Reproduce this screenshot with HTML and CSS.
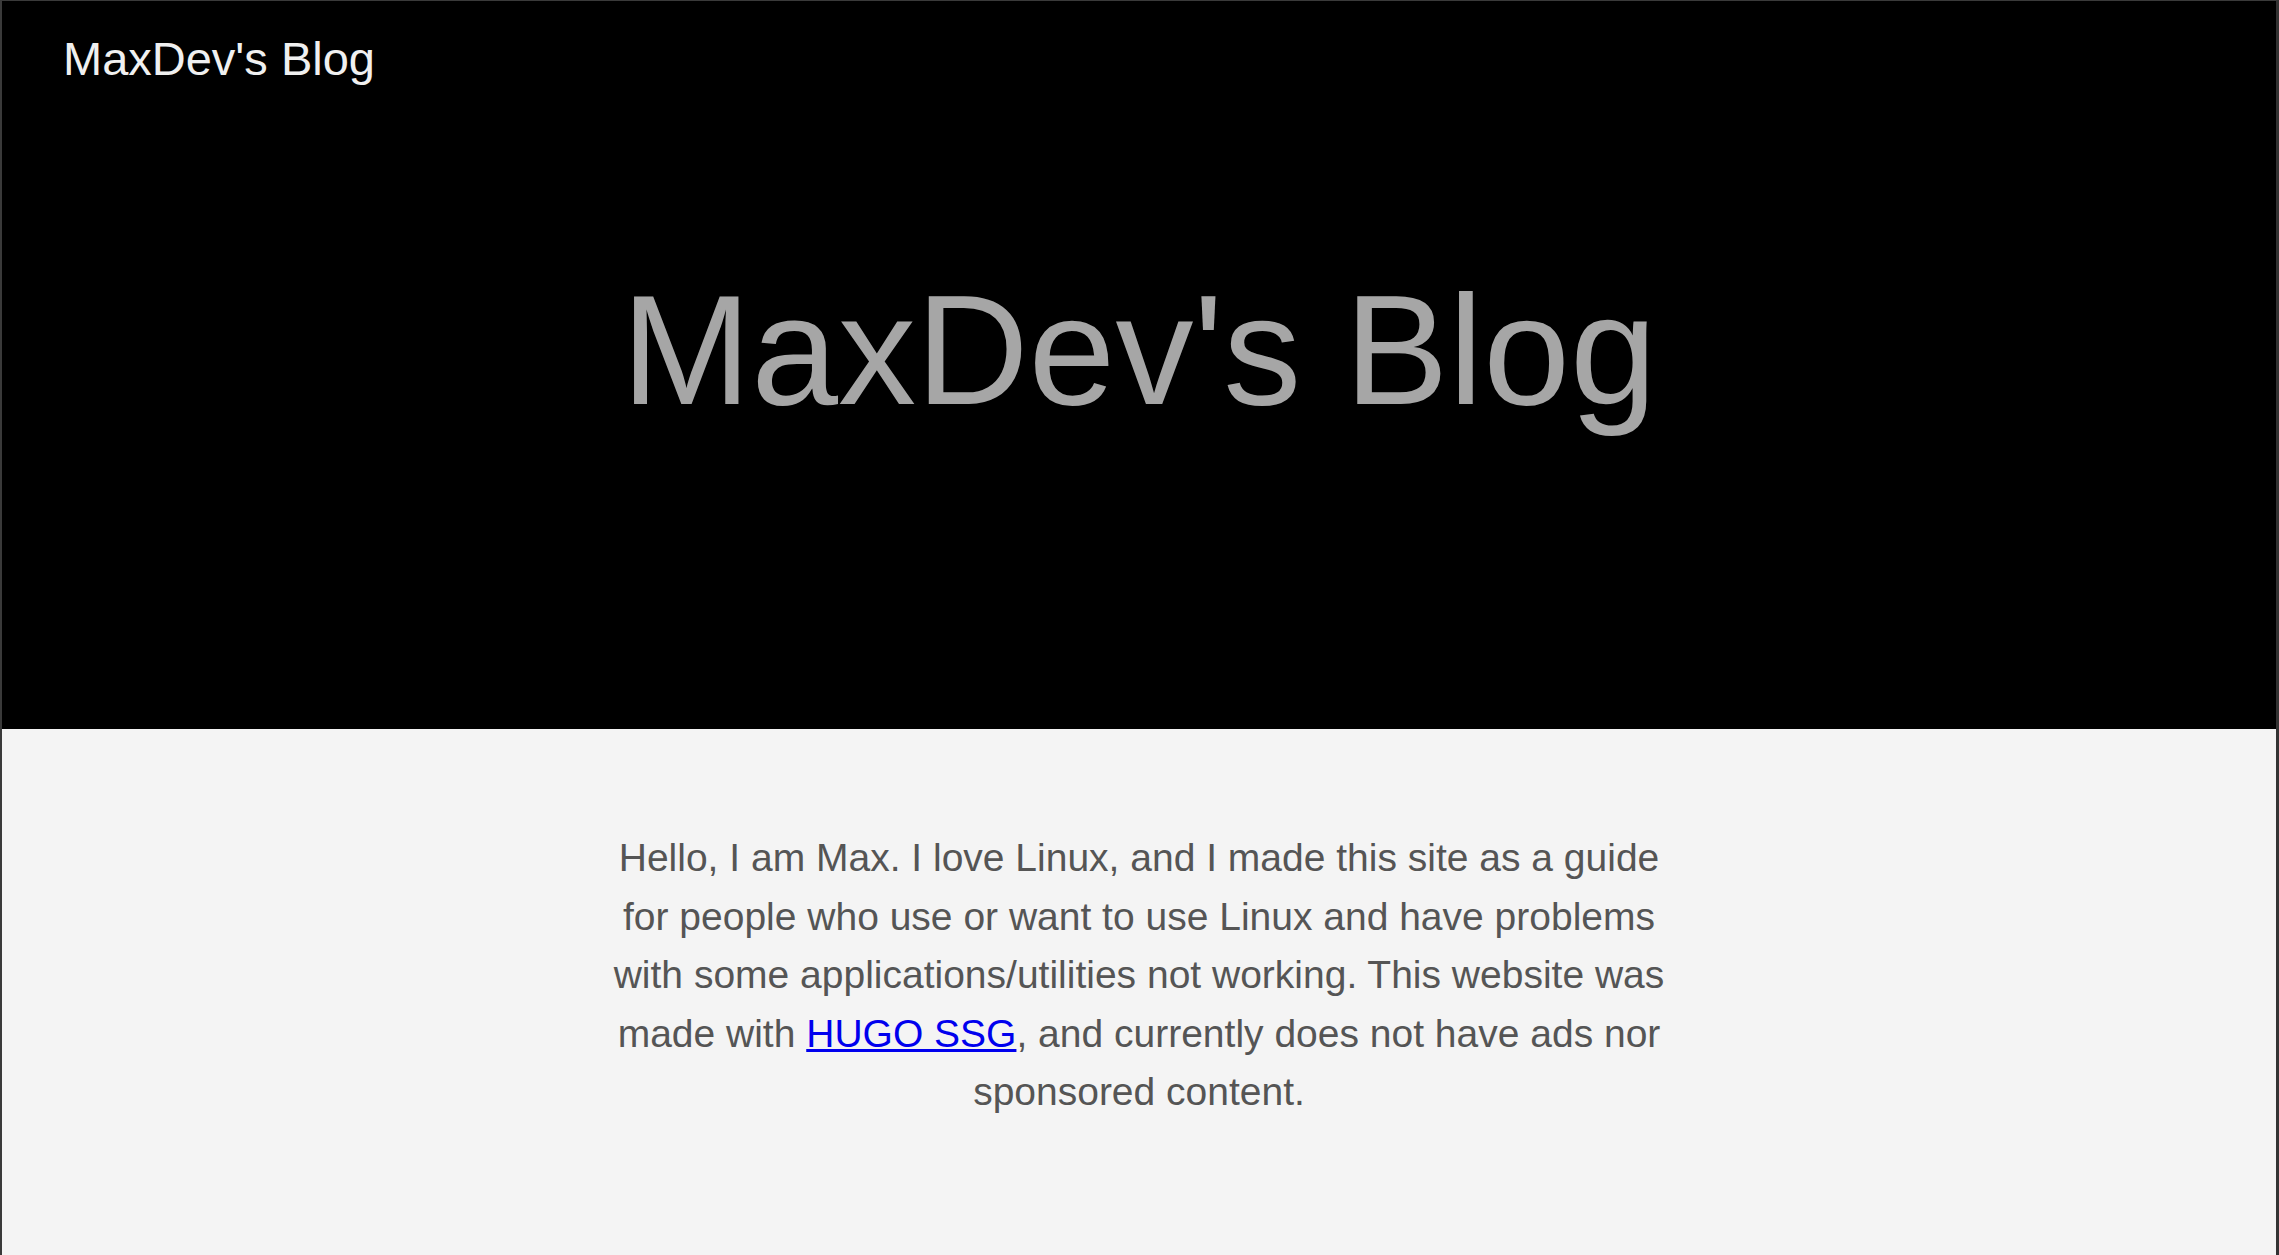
FILE: index.html
```html
<!DOCTYPE html>
<html lang="en">
<head>
<meta charset="utf-8">
<title>MaxDev's Blog</title>
<link rel="stylesheet" href="styles.css">
</head>
<body>
<div class="page">
  <header class="site-header">
    <div class="nav-title">MaxDev's Blog</div>
    <h1 class="hero-title">MaxDev's Blog</h1>
  </header>
  <main class="content">
    <p class="intro">Hello, I am Max. I love Linux, and I made this site as a guide for people who use or want to use Linux and have problems with some applications/utilities not working. This website was made with <a href="#">HUGO SSG</a>, and currently does not have ads nor sponsored content.</p>
  </main>
</div>
</body>
</html>
```

FILE: styles.css
```css
html, body {
  margin: 0;
  padding: 0;
  height: 100%;
}

body {
  font-family: "Liberation Sans", Arial, sans-serif;
  background: #f4f4f4;
}

.page {
  box-sizing: border-box;
  min-height: 100vh;
  border-top: 1px solid #3a3a3a;
  border-left: 2px solid #3a3a3a;
  border-right: 3px solid #333333;
  background: #f4f4f4;
  display: flex;
  flex-direction: column;
}

.site-header {
  box-sizing: border-box;
  background: #000000;
  height: 728px;
  padding: 34px 61px 0;
  display: flex;
  flex-direction: column;
}

.nav-title {
  color: #f0f0f0;
  font-size: 47px;
  line-height: 47px;
}

.hero-title {
  margin: 190px 0 0;
  text-align: center;
  color: #a6a6a6;
  font-weight: normal;
  font-size: 156px;
  line-height: 156px;
}

.content {
  display: flex;
  justify-content: center;
  padding-top: 100px;
}

.intro {
  margin: 0;
  width: 1075px;
  text-align: center;
  color: #555555;
  font-size: 39px;
  line-height: 58.5px;
}

.intro a {
  color: #0000ee;
  text-decoration: underline;
}
```
